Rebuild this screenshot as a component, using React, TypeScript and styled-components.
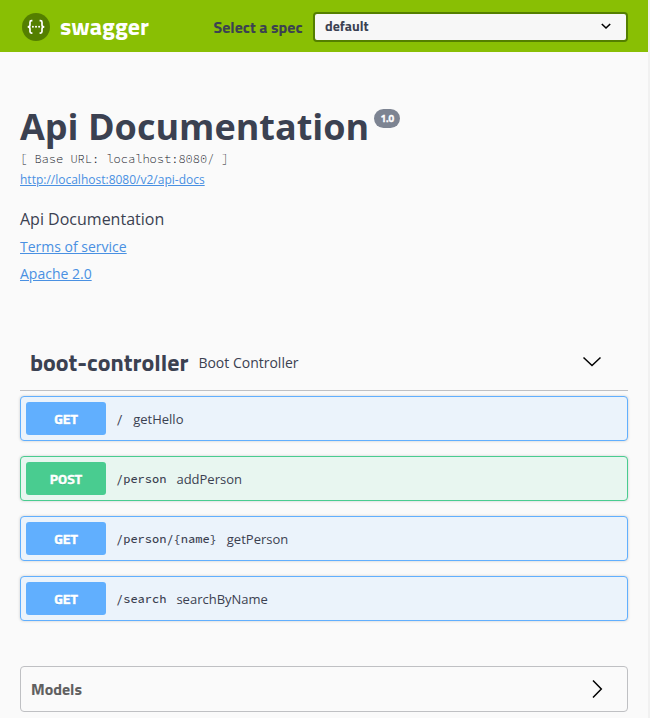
import React from 'react';
import styled, { createGlobalStyle } from 'styled-components';

const heading = '"Titillium Web", Roboto, "Open Sans", sans-serif';
const body = '"Open Sans", "Noto Sans", sans-serif';
const mono = '"Source Code Pro", "DejaVu Sans Mono", monospace';

const GlobalStyle = createGlobalStyle`
  * { box-sizing: border-box; }
  body { margin: 0; background: #fafafa; color: #3b4151; font-family: ${body}; }
  h1, h2, h3, p { margin: 0; }
`;

const Page = styled.div`
  height: 718px;
  overflow: hidden;
  border-right: 2px solid #f1f1f1;
  background: #fafafa;
`;

const TopBar = styled.header`
  height: 52px;
  padding: 2px 20px 0 22px;
  display: flex;
  align-items: center;
  background: #89bf04;
`;

const Brand = styled.a`
  display: flex;
  align-items: center;
  width: 191.5px;
  gap: 10px;
  color: #fff;
  font: 700 24px/28px ${heading};
`;

const BrandName = styled.span`
  padding-bottom: 2px;
`;

const SpecLabel = styled.label`
  width: 99.5px;
  padding-bottom: 1px;
  white-space: nowrap;
  font: 700 16px/24px ${heading};
`;

const SpecSelect = styled.div`
  flex: 1;
  height: 30px;
  padding: 0 15px 2px 10px;
  display: flex;
  align-items: center;
  justify-content: space-between;
  border: 2px solid #547f00;
  border-radius: 4px;
  background: #f7f7f7;
  font: 700 14px/20px ${heading};
`;

const Info = styled.section`
  height: 284px;
  padding: 53px 20px 0;
`;

const TitleRow = styled.div`
  display: flex;
  align-items: flex-start;
  gap: 5px;
  height: 46px;
`;

const Title = styled.h1`
  font: 700 36px/44px ${body};
  white-space: nowrap;
`;

const Version = styled.span`
  margin-top: 4px;
  width: 26px;
  height: 19px;
  border-radius: 10px;
  background: #7d8492;
  color: #fff;
  font: 700 10px/19px ${heading};
  text-align: center;
  -webkit-text-stroke: 0.3px #fff;
`;

const BaseUrl = styled.p`
  font: 300 12px/16px ${mono};
  color: #10131c;
  white-space: pre;
`;

const Link = styled.a<{ $small?: boolean }>`
  display: block;
  width: max-content;
  font: 400 ${(p) => (p.$small ? '12px/25px' : '14px/27px')} ${body};
  color: #4990e2;
  text-decoration: underline;
`;

const Description = styled.p`
  margin-top: 13px;
  font: 400 16px/28px ${body};
`;

const TagHeader = styled.div`
  margin: 0 20px 5px;
  height: 55px;
  padding: 0 26px 0 10px;
  display: flex;
  align-items: center;
  border-bottom: 1px solid #bfc0c3;

  svg { margin-bottom: 2px; }
`;

const TagName = styled.h2`
  width: 168.4px;
  padding-bottom: 2px;
  white-space: nowrap;
  font: 700 24px/32px ${heading};
`;

const TagNote = styled.span`
  flex: 1;
  font: 400 14px/20px ${body};
`;

const Operations = styled.div`
  padding: 0 20px;
  display: flex;
  flex-direction: column;
  gap: 15px;
`;

const Operation = styled.div<{ $color: string; $tint: string }>`
  height: 45px;
  padding: 0 5px;
  display: flex;
  align-items: center;
  border: 1px solid ${(p) => p.$color};
  border-radius: 4px;
  background: ${(p) => p.$tint};
  box-shadow: 0 0 3px rgba(0, 0, 0, 0.19);
`;

const Method = styled.span<{ $color: string }>`
  width: 80px;
  height: 33px;
  border-radius: 3px;
  background: ${(p) => p.$color};
  color: #fff;
  font: 700 14px/34px ${heading};
  text-align: center;
  text-shadow: 0 1px 0 rgba(0, 0, 0, 0.1);
  -webkit-text-stroke: 0.4px #fff;
`;

const Path = styled.span`
  margin: 0 10px;
  font: 500 12px/20px ${mono};
`;

const Summary = styled.span`
  font: 400 13px/20px ${body};
`;

const Models = styled.section`
  margin: 45px 20px 0;
  height: 46px;
  padding: 0 24px 0 10px;
  display: flex;
  align-items: center;
  justify-content: space-between;
  border: 1px solid #bfc0c3;
  border-radius: 4px;
`;

const ModelsTitle = styled.h3`
  font: 700 16px/24px ${heading};
  color: #606060;
`;

const methods = {
  GET: { color: '#61affe', tint: '#ebf3fb' },
  POST: { color: '#49cc90', tint: '#e8f6f0' },
};

const operations: { method: keyof typeof methods; path: string; summary: string }[] = [
  { method: 'GET', path: '/', summary: 'getHello' },
  { method: 'POST', path: '/person', summary: 'addPerson' },
  { method: 'GET', path: '/person/{name}', summary: 'getPerson' },
  { method: 'GET', path: '/search', summary: 'searchByName' },
];

const Logo = () => (
  <svg width="28" height="28" viewBox="0 0 28 28">
    <circle cx="14" cy="14" r="14" fill="#547f00" />
    <g fill="none" stroke="#fff" strokeWidth="1.7">
      <path d="M10.4 7.6H9.6Q8 7.6 8 9.2V11.9Q8 13.9 5.7 13.9Q8 13.9 8 15.9V18.6Q8 20.2 9.6 20.2H10.4" />
      <path d="M17.6 7.6H18.4Q20 7.6 20 9.2V11.9Q20 13.9 22.3 13.9Q20 13.9 20 15.9V18.6Q20 20.2 18.4 20.2H17.6" />
    </g>
    <g fill="#fff">
      <circle cx="10.9" cy="13.7" r="1" />
      <circle cx="14" cy="13.7" r="1" />
      <circle cx="17.1" cy="13.7" r="1" />
    </g>
  </svg>
);

const SelectArrow = () => (
  <svg width="10" height="7" viewBox="0 0 10 7" fill="none" stroke="#000" strokeWidth="1.6">
    <path d="M.8 1L5 5L9.2 1" />
  </svg>
);

const ChevronDown = () => (
  <svg width="20" height="20" viewBox="0 0 20 20" fill="none" stroke="#000" strokeWidth="1.5">
    <path d="M1.5 5.5L10 13.5L18.5 5.5" />
  </svg>
);

const ChevronRight = () => (
  <svg width="12" height="20" viewBox="0 0 12 20" fill="none" stroke="#000" strokeWidth="1.5">
    <path d="M2 1.5L10.3 10L2 18.5" />
  </svg>
);

export default function App() {
  return (
    <>
      <GlobalStyle />
      <Page>
        <TopBar>
          <Brand><Logo /><BrandName>swagger</BrandName></Brand>
          <SpecLabel>Select a spec</SpecLabel>
          <SpecSelect>default<SelectArrow /></SpecSelect>
        </TopBar>
        <Info>
          <TitleRow>
            <Title>Api Documentation</Title>
            <Version>1.0</Version>
          </TitleRow>
          <BaseUrl>[ Base URL: localhost:8080/ ]</BaseUrl>
          <Link $small>http://localhost:8080/v2/api-docs</Link>
          <Description>Api Documentation</Description>
          <Link>Terms of service</Link>
          <Link>Apache 2.0</Link>
        </Info>
        <TagHeader>
          <TagName>boot-controller</TagName>
          <TagNote>Boot Controller</TagNote>
          <ChevronDown />
        </TagHeader>
        <Operations>
          {operations.map(({ method, path, summary }) => (
            <Operation key={path} $color={methods[method].color} $tint={methods[method].tint}>
              <Method $color={methods[method].color}>{method}</Method>
              <Path>{path}</Path>
              <Summary>{summary}</Summary>
            </Operation>
          ))}
        </Operations>
        <Models>
          <ModelsTitle>Models</ModelsTitle>
          <ChevronRight />
        </Models>
      </Page>
    </>
  );
}
